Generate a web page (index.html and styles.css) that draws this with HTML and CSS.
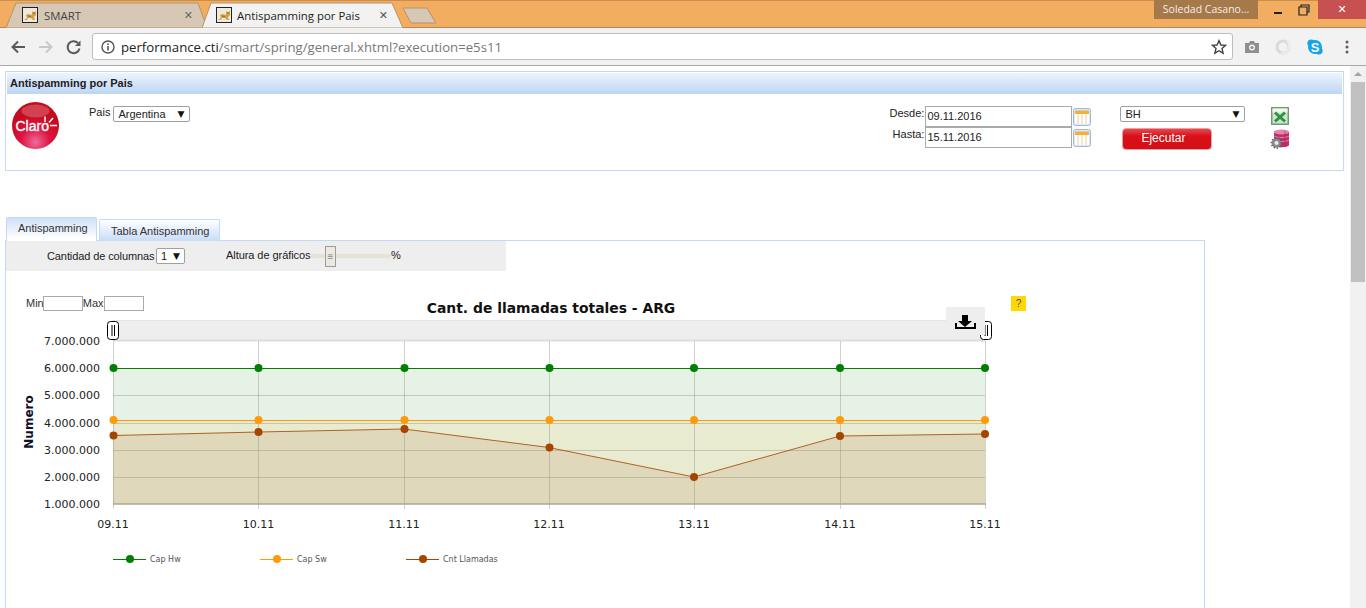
FILE: index.html
```html
<!DOCTYPE html>
<html>
<head>
    <meta charset="UTF-8">
    <title>Antispamming por Pais</title>
    <link rel="stylesheet" href="styles.css">
</head>
<body>
    <div class="tabstrip">
        <div class="btab btab-off">
            <svg class="btab-shape" viewBox="0 0 201 26" preserveAspectRatio="none"><path d="M0 26 L10 1 L192 1 L201 26 Z" fill="#d6c8b4" stroke="#b5946c"/></svg>
            <svg class="favicon" viewBox="0 0 16 16"><rect x=".5" y=".5" width="15" height="15" fill="#efe9dc" stroke="#222"/><path d="M2 13 L5 11 L4 8 L6 7 L10 8 L10 4 L11 5 L13 5 L14 3.500 L14 8 L12 10 L13 13 L11 13 L9 11 L6 11 L5 13 Z" fill="#d3a04a"/><path d="M6 9 L9 9.500 M11 6 H13" stroke="#8a6a35"/></svg>
            <span class="btab-title">SMART</span>
            <span class="btab-x">✕</span>
        </div>
        <div class="btab btab-on">
            <svg class="btab-shape" viewBox="0 0 201 26" preserveAspectRatio="none"><path d="M0 26 L9 1 L190 1 L201 26 Z" fill="#f2f2f2" stroke="#b5946c"/></svg>
            <svg class="favicon" viewBox="0 0 16 16"><rect x=".5" y=".5" width="15" height="15" fill="#efe9dc" stroke="#222"/><path d="M2 13 L5 11 L4 8 L6 7 L10 8 L10 4 L11 5 L13 5 L14 3.500 L14 8 L12 10 L13 13 L11 13 L9 11 L6 11 L5 13 Z" fill="#d3a04a"/><path d="M6 9 L9 9.500 M11 6 H13" stroke="#8a6a35"/></svg>
            <span class="btab-title">Antispamming por Pais</span>
            <span class="btab-x">✕</span>
        </div>
        <svg class="newtab" viewBox="0 0 36 18"><path d="M1 1 L25 1 L34 16 L9 16 Z" fill="#d6c8b4" stroke="#b5946c" stroke-linejoin="round"/></svg>
        <div class="user-chip">Soledad Casano...</div>
        <div class="win-ctl win-min">
            <svg width="10" height="10" viewBox="0 0 10 10"><rect x="1" y="7" width="8" height="2" fill="#222"/></svg>
        </div>
        <div class="win-ctl win-max">
            <svg width="12" height="12" viewBox="0 0 12 12"><path d="M3 3 V1 H11 V8 H9 M1 3 H9 V11 H1 Z" fill="none" stroke="#222" stroke-width="1.2"/></svg>
        </div>
        <div class="win-close">✕</div>
    </div>

    <div class="navbar">
        <svg class="nav-btn" viewBox="0 0 16 16"><path d="M15 8 H3 M8 2.500 L2.500 8 L8 13.500" fill="none" stroke="#5a5a5a" stroke-width="2"/></svg>
        <svg class="nav-btn" viewBox="0 0 16 16"><path d="M1 8 H13 M8 2.500 L13.500 8 L8 13.500" fill="none" stroke="#c8c8c8" stroke-width="2"/></svg>
        <svg class="nav-btn" viewBox="0 0 16 16"><path d="M13.500 9.500 A6 6 0 1 1 12 4" fill="none" stroke="#5a5a5a" stroke-width="2"/><path d="M14.500 1.500 V7 H9 Z" fill="#5a5a5a"/></svg>
        <div class="addr">
            <svg class="addr-info" viewBox="0 0 14 14"><circle cx="7" cy="7" r="6" fill="none" stroke="#555" stroke-width="1.400"/><rect x="6.200" y="6" width="1.600" height="4.500" fill="#555"/><rect x="6.200" y="3.400" width="1.600" height="1.600" fill="#555"/></svg>
            <span class="addr-host">performance.cti</span><span class="addr-path">/smart/spring/general.xhtml?execution=e5s11</span>
            <svg class="addr-star" viewBox="0 0 16 16"><path d="M8 1.600 L9.900 6 L14.600 6.400 L11 9.500 L12.100 14.200 L8 11.700 L3.900 14.200 L5 9.500 L1.400 6.400 L6.100 6 Z" fill="none" stroke="#444" stroke-width="1.400"/></svg>
        </div>
        <svg class="ext-camera" viewBox="0 0 16 14"><path d="M1 3 H5 L6 1 H10 L11 3 H15 V13 H1 Z" fill="#8f8f8f"/><circle cx="8" cy="7.500" r="3" fill="#f2f2f2"/><circle cx="8" cy="7.500" r="1.600" fill="#8f8f8f"/></svg>
        <svg class="ext-ring" viewBox="0 0 16 16"><circle cx="8" cy="8" r="6" fill="none" stroke="#d9d9d9" stroke-width="3"/><path d="M12 2 A7 7 0 0 1 6 14" fill="none" stroke="#ececec" stroke-width="2"/></svg>
        <svg class="ext-skype" viewBox="0 0 16 16"><circle cx="8" cy="8" r="7" fill="#12a5ec"/><circle cx="4.200" cy="4.200" r="3.800" fill="#12a5ec"/><circle cx="11.800" cy="11.800" r="3.800" fill="#12a5ec"/><text x="8" y="12.600" class="skype-s">S</text></svg>
        <svg class="ext-menu" viewBox="0 0 4 14"><circle cx="2" cy="2" r="1.500" fill="#5f5f5f"/><circle cx="2" cy="7" r="1.500" fill="#5f5f5f"/><circle cx="2" cy="12" r="1.500" fill="#5f5f5f"/></svg>
    </div>

    <div class="viewport">
        <div class="page">
            <div class="panel">
                <div class="panel-head">Antispamming por Pais</div>
                <div class="panel-body">
                    <svg class="logo" viewBox="0 0 47 47">
                        <defs>
                            <radialGradient id="logoFill" cx="50%" cy="85%" r="62%">
                                <stop offset="0" stop-color="#ee6a9c"/>
                                <stop offset=".5" stop-color="#de1440"/>
                                <stop offset="1" stop-color="#c40c1e"/>
                            </radialGradient>
                        </defs>
                        <circle cx="23.500" cy="23.500" r="23.500" fill="url(#logoFill)"/>
                        <ellipse cx="23.500" cy="9" rx="14" ry="6.500" fill="#fff" opacity=".22"/>
                        <text x="3.500" y="29" class="logo-text">Claro</text>
                        <path d="M33 20 V14.500 M37 20.500 L41 16 M38 23.500 H45" stroke="#fff" stroke-width="1.500" fill="none"/>
                    </svg>
                    <div class="pais">
                        <span class="pais-label">Pais</span>
                        <div class="select select-pais">Argentina<span class="arrow">▼</span></div>
                    </div>
                    <div class="dates">
                        <span class="date-label">Desde:</span>
                        <div class="date-input">09.11.2016</div>
                        <svg class="cal" viewBox="0 0 18 18"><rect x=".5" y=".5" width="17" height="17" rx="2" fill="#dce8f7" stroke="#9fb8dc"/><rect x="2" y="2.500" width="14" height="3.500" fill="#f4ae3c"/><path d="M2 6 H16 V16 H2 Z" fill="#fff"/><path d="M5 6 V16 M9 6 V16 M13 6 V16" stroke="#f0cf8d"/></svg>
                        <span class="date-label">Hasta:</span>
                        <div class="date-input">15.11.2016</div>
                        <svg class="cal" viewBox="0 0 18 18"><rect x=".5" y=".5" width="17" height="17" rx="2" fill="#dce8f7" stroke="#9fb8dc"/><rect x="2" y="2.500" width="14" height="3.500" fill="#f4ae3c"/><path d="M2 6 H16 V16 H2 Z" fill="#fff"/><path d="M5 6 V16 M9 6 V16 M13 6 V16" stroke="#f0cf8d"/></svg>
                    </div>
                    <div class="run">
                        <div class="select select-bh">BH<span class="arrow">▼</span></div>
                        <div class="run-btn">Ejecutar</div>
                    </div>
                    <div class="exports">
                        <svg class="icon-xls" viewBox="0 0 18 18"><rect width="18" height="18" fill="#6d9a72"/><rect x="1.500" y="1.500" width="15" height="15" fill="#cfe3cd"/><rect x="1.500" y="1.500" width="15" height="4" fill="#eef5ec"/><path d="M4 5.500 L14 14.500 M14 5.500 L4 14.500" stroke="#2a9440" stroke-width="3"/></svg>
                        <svg class="icon-db" viewBox="0 0 20 20"><path d="M4 3 C4 .5 19 .5 19 3 V16 C19 19 4 19 4 16 Z" fill="#bf2f6e"/><ellipse cx="11.500" cy="3" rx="7.500" ry="2.400" fill="#e684ac"/><path d="M4 7 C7 9 16 9 19 7 M4 11 C7 13 16 13 19 11" stroke="#e684ac" fill="none"/><path d="M15 2 V17" stroke="#8f1c52" stroke-opacity=".5"/><circle cx="6.500" cy="14" r="4.600" fill="#8a8a8a"/><circle cx="6.500" cy="14" r="5" fill="none" stroke="#5e5e5e" stroke-width="1.600" stroke-dasharray="1.600 1.400"/><circle cx="6.500" cy="14" r="2" fill="#eee"/></svg>
                    </div>
                </div>
            </div>

            <div class="tabs">
                <div class="tab tab-active">Antispamming</div>
                <div class="tab">Tabla Antispamming</div>
            </div>
            <div class="tab-content">
                <div class="chart-tools">
                    <span class="tool-cols">Cantidad de columnas</span>
                    <div class="select select-cols">1<span class="arrow">▼</span></div>
                    <span class="tool-height">Altura de gráficos</span>
                    <div class="slider"><div class="slider-track"></div><div class="slider-handle">≡</div></div>
                    <span class="tool-pct">%</span>
                </div>
                <div class="chart-head">
                    <div class="range">
                        <span class="range-min">Min</span><div class="range-input"></div>
                        <span>Max</span><div class="range-input"></div>
                    </div>
                    <div class="chart-title">Cant. de llamadas totales - ARG</div>
                    <div class="help">?</div>
                </div>
                <svg class="chart" viewBox="6 312 1198 296" width="1198" height="296">
                    <!-- range selector -->
                    <rect x="113" y="320.500" width="872" height="20" fill="#eeeeee" stroke="#e4e4e4"/>
                    <line x1="113" y1="340.500" x2="985" y2="340.500" stroke="#dcdcdc" stroke-width="2"/>
                    <rect x="107.500" y="321.500" width="11" height="18" rx="3" fill="#fff" stroke="#000"/>
                    <path d="M112 325 V336 M114.500 325 V336" stroke="#000"/>
                    <rect x="980.500" y="321.500" width="11" height="18" rx="3" fill="#fff" stroke="#000"/>
                    <path d="M985 325 V336 M987.500 325 V336" stroke="#000"/>

                    <!-- areas -->
                    <rect x="113" y="368" width="872" height="136" fill="#e6f2e6"/>
                    <rect x="113" y="421" width="872" height="83" fill="#e9ebd1"/>
                    <path d="M113 435.500 L258.500 432 L404 429 L549 447.500 L694 477 L840 436 L985 434 V504 H113 Z" fill="#e0d8bb"/>

                    <!-- grid -->
                    <g class="grid">
                        <path d="M113 395.500 H985 M113 423.500 H985 M113 450.500 H985 M113 477.500 H985"/>
                        <path d="M113.500 341 V509 M258.500 341 V509 M404.500 341 V509 M549.500 341 V509 M694.500 341 V509 M840.500 341 V509 M985.500 341 V509"/>
                    </g>
                    <line x1="113" y1="504" x2="986" y2="504" stroke="#aca698" stroke-width="1.400"/>

                    <!-- series -->
                    <path d="M113 368.500 H985" stroke="#008000" fill="none"/>
                    <path d="M113 420.500 H985" stroke="#ff9a00" fill="none"/>
                    <path d="M113 435.500 L258.500 432 L404 429 L549 447.500 L694 477 L840 436 L985 434" stroke="#a64a0a" stroke-opacity=".85" fill="none"/>
                    <g fill="#008000">
                        <circle cx="113.500" cy="368" r="4"/><circle cx="258.500" cy="368" r="4"/><circle cx="404.500" cy="368" r="4"/><circle cx="549.500" cy="368" r="4"/><circle cx="694" cy="368" r="4"/><circle cx="840" cy="368" r="4"/><circle cx="985" cy="368" r="4"/>
                    </g>
                    <g fill="#ff9a0a">
                        <circle cx="113.500" cy="420" r="4"/><circle cx="258.500" cy="420" r="4"/><circle cx="404.500" cy="420" r="4"/><circle cx="549.500" cy="420" r="4"/><circle cx="694" cy="420" r="4"/><circle cx="840" cy="420" r="4"/><circle cx="985" cy="420" r="4"/>
                    </g>
                    <g fill="#a44500">
                        <circle cx="113.500" cy="435.500" r="4"/><circle cx="258.500" cy="432" r="4"/><circle cx="404.500" cy="429" r="4"/><circle cx="549.500" cy="447.500" r="4"/><circle cx="694" cy="477" r="4"/><circle cx="840" cy="436" r="4"/><circle cx="985" cy="434" r="4"/>
                    </g>

                    <!-- axes -->
                    <g class="y-labels">
                        <text x="100" y="345">7.000.000</text>
                        <text x="100" y="372">6.000.000</text>
                        <text x="100" y="399">5.000.000</text>
                        <text x="100" y="427">4.000.000</text>
                        <text x="100" y="454">3.000.000</text>
                        <text x="100" y="481">2.000.000</text>
                        <text x="100" y="508">1.000.000</text>
                    </g>
                    <g class="x-labels">
                        <text x="113" y="528">09.11</text>
                        <text x="258.500" y="528">10.11</text>
                        <text x="404" y="528">11.11</text>
                        <text x="549" y="528">12.11</text>
                        <text x="694" y="528">13.11</text>
                        <text x="840" y="528">14.11</text>
                        <text x="985" y="528">15.11</text>
                    </g>
                    <text class="y-title" transform="translate(33 422) rotate(-90)">Numero</text>

                    <!-- legend -->
                    <path d="M113 559.500 H146" stroke="#008000"/><circle cx="130" cy="559" r="4" fill="#008000"/>
                    <text class="legend" x="150" y="562">Cap Hw</text>
                    <path d="M260 559.500 H293" stroke="#ff9a0a"/><circle cx="277" cy="559" r="4" fill="#ff9a0a"/>
                    <text class="legend" x="297" y="562">Cap Sw</text>
                    <path d="M406 559.500 H439" stroke="#a44500"/><circle cx="423" cy="559" r="4" fill="#a44500"/>
                    <text class="legend" x="443" y="562">Cnt Llamadas</text>

                    <!-- download -->
                    <rect x="946" y="307" width="39" height="28" fill="#eeeeee"/>
                    <path d="M962 315 H968 V321 H972 L965 327 L958 321 H962 Z" fill="#000"/>
                    <path d="M956 323 V328 H975 V323" fill="none" stroke="#000" stroke-width="2"/>
                </svg>
            </div>
        </div>
        <div class="scrollbar">
            <div class="scroll-up"></div>
            <div class="scroll-thumb"></div>
        </div>
    </div>
</body>
</html>
```

FILE: styles.css
```css
* {
    box-sizing: border-box;
    margin: 0;
    padding: 0;
}

html, body {
    height: 608px;
    overflow: hidden;
}

body {
    font-family: 'Liberation Sans', Arial, sans-serif;
    font-size: 11px;
    color: #222;
    background: #fff;
    display: flex;
    flex-direction: column;
}

/* browser chrome */
.tabstrip {
    height: 28px;
    flex: none;
    display: flex;
    align-items: flex-start;
    background: #f3ad61;
    box-shadow: inset 0 1px #c98f50;
    border-bottom: 1px solid #b08a5e;
    padding-left: 6px;
}

.btab {
    position: relative;
    width: 201px;
    height: 26px;
    margin-top: 2px;
    display: flex;
    align-items: center;
    font-family: 'Open Sans', 'Noto Sans', sans-serif;
    font-size: 11.4px;
    flex: none;
}

.btab-on {
    margin-left: -5px;
}

.btab-shape {
    position: absolute;
    left: 0;
    top: 0;
    width: 100%;
    height: 26px;
}

.favicon {
    position: relative;
    width: 16px;
    height: 16px;
    margin-left: 16px;
    margin-right: 6px;
    flex: none;
}

.btab-on .favicon {
    margin-left: 14px;
    margin-right: 5px;
}

.btab-title {
    position: relative;
    flex: 1;
    color: #444;
}

.btab-on .btab-title {
    color: #222;
}

.btab-x {
    position: relative;
    margin-right: 14px;
    font-family: 'DejaVu Sans', sans-serif;
    font-size: 11px;
    font-weight: bold;
    color: #666;
}

.btab-on .btab-x {
    margin-right: 15px;
    color: #555;
}

.newtab {
    width: 36px;
    height: 18px;
    margin-top: 7px;
    margin-left: -1px;
    flex: none;
}

.user-chip {
    margin-left: auto;
    width: 104px;
    height: 19px;
    background: #a6794a;
    color: #f3eee8;
    font-family: 'Open Sans', sans-serif;
    font-size: 10.5px;
    line-height: 19px;
    text-align: center;
    white-space: nowrap;
}

.win-ctl {
    height: 19px;
    display: flex;
    align-items: center;
    justify-content: center;
}

.win-min {
    width: 40px;
}

.win-max {
    width: 20px;
    padding-right: 8px;
}

.win-close {
    width: 48px;
    height: 19px;
    background: #c75050;
    color: #fff;
    font-family: 'DejaVu Sans', sans-serif;
    font-size: 11px;
    line-height: 19px;
    text-align: center;
}

.navbar {
    height: 38px;
    flex: none;
    display: flex;
    align-items: center;
    background: #f2f2f2;
    border-bottom: 1px solid #a9a9a9;
    padding-left: 10px;
}

.nav-btn {
    width: 16px;
    height: 16px;
    margin-right: 12px;
    flex: none;
}

.addr {
    width: 1141px;
    height: 27px;
    margin-left: -2px;
    display: flex;
    align-items: center;
    padding-left: 8px;
    background: #fff;
    border: 1px solid #bdbdbd;
    border-radius: 3px;
    font-family: 'Open Sans', 'Noto Sans', sans-serif;
    font-size: 13.2px;
    flex: none;
}

.addr-info {
    width: 14px;
    height: 14px;
    margin-right: 6px;
}

.addr-host {
    color: #222;
}

.addr-path {
    color: #777;
}

.addr-star {
    width: 16px;
    height: 16px;
    margin-left: auto;
    margin-right: 5px;
}

.ext-camera {
    width: 16px;
    height: 14px;
    margin-left: 11px;
}

.ext-ring {
    width: 16px;
    height: 16px;
    margin-left: 15px;
}

.ext-skype {
    width: 16px;
    height: 16px;
    margin-left: 16px;
}

.skype-s {
    font-family: 'Liberation Sans', sans-serif;
    font-size: 13px;
    font-weight: bold;
    fill: #fff;
    text-anchor: middle;
}

.ext-menu {
    width: 4px;
    height: 14px;
    margin-left: 22px;
}

/* page */
.viewport {
    flex: 1;
    display: flex;
    min-height: 0;
    overflow: hidden;
}

.page {
    flex: 1;
    min-width: 0;
    padding: 5px 0 0 5px;
}

.panel {
    width: 1339px;
    height: 100px;
    border: 1px solid #c4d9f5;
    padding: 1px;
}

.panel-head {
    height: 21px;
    padding-left: 3px;
    font-size: 11px;
    font-weight: bold;
    line-height: 20px;
    color: #222;
    background: linear-gradient(#eef4fd, #bcd5f5);
}

.panel-body {
    display: flex;
    align-items: flex-start;
    padding: 8px 0 0 5px;
}

.logo {
    width: 47px;
    height: 47px;
    flex: none;
}

.logo-text {
    font-family: 'Liberation Sans', sans-serif;
    font-size: 14px;
    fill: #fff;
    stroke: #fff;
    stroke-width: .35;
}

.pais {
    display: flex;
    align-items: flex-start;
    margin-left: 30px;
    margin-top: 4px;
}

.pais-label {
    margin-right: 3px;
}

.select {
    display: flex;
    justify-content: space-between;
    align-items: center;
    height: 16px;
    padding: 0 5px 0 4px;
    background: #fff;
    border: 1px solid #a0a0a0;
    border-radius: 2px;
    font-size: 11px;
    color: #222;
}

.arrow {
    font-family: 'DejaVu Sans', sans-serif;
    font-size: 9px;
    color: #111;
}

.select-pais {
    width: 77px;
}

.select-bh {
    width: 125px;
}

.select-cols {
    width: 29px;
    padding: 0 4px;
}

.dates {
    display: grid;
    grid-template-columns: 35px 147px 18px;
    column-gap: 1px;
    margin-left: 699px;
    margin-top: 4px;
    align-items: start;
}

.date-label {
    text-align: right;
    line-height: 14px;
}

.date-input {
    height: 21px;
    padding-left: 1px;
    line-height: 18px;
    background: #fff;
    border: 1px solid #aaa;
}

.cal {
    width: 18px;
    height: 18px;
    margin-top: 2px;
}

.run {
    margin-left: 29px;
    margin-top: 4px;
}

.run-btn {
    width: 90px;
    height: 22px;
    margin-top: 6px;
    margin-left: 2px;
    padding-left: 18px;
    background: linear-gradient(#e64a4f, #d8111a 35%, #d40f14);
    border: 1px solid #e8a0a0;
    border-radius: 4px;
    color: #fff;
    font-size: 12px;
    line-height: 18px;
}

.exports {
    display: flex;
    flex-direction: column;
    align-items: flex-start;
    margin-left: 25px;
    margin-top: 5px;
}

.icon-xls {
    width: 18px;
    height: 18px;
    margin-left: 1px;
}

.icon-db {
    width: 20px;
    height: 20px;
    margin-top: 4px;
}

/* tabs */
.tabs {
    display: flex;
    align-items: flex-end;
    gap: 2px;
    margin-top: 46px;
    margin-left: 1px;
    height: 24px;
    margin-bottom: -1px;
    position: relative;
}

.tab {
    height: 22px;
    padding: 0 10px 0 11px;
    border: 1px solid #c4d9f5;
    border-bottom: none;
    border-radius: 2px 2px 0 0;
    line-height: 22px;
    color: #333;
    background: linear-gradient(#fff, #c7dcf8);
}

.tab-active {
    height: 24px;
    width: 91px;
    white-space: nowrap;
    line-height: 21px;
    background: linear-gradient(#cfe0f8, #fff 90%);
}

.tab-content {
    width: 1200px;
    height: 400px;
    border: 1px solid #c4d9f5;
}

.chart-tools {
    width: 500px;
    height: 30px;
    display: flex;
    align-items: center;
    background: #eeeeee;
    padding-left: 41px;
}

.tool-cols {
    width: 109px;
    white-space: nowrap;
    letter-spacing: -0.1px;
}

.tool-height {
    margin-left: 41px;
    margin-top: -2px;
    width: 85px;
    white-space: nowrap;
    letter-spacing: -0.06px;
}

.tool-pct {
    margin-top: -2px;
}

.slider {
    position: relative;
    width: 80px;
    height: 21px;
}

.slider-track {
    position: absolute;
    left: 0;
    right: 0;
    top: 8px;
    height: 4px;
    background: #e6e2da;
}

.slider-handle {
    position: absolute;
    left: 14px;
    top: 0;
    width: 11px;
    height: 21px;
    background: #ece9e3;
    border: 1px solid #a39c92;
    font-size: 10px;
    line-height: 19px;
    text-align: center;
    color: #888;
}

.chart-head {
    display: grid;
    grid-template-columns: 138px 774px 15px;
    height: 16px;
    margin-top: 25px;
    padding-left: 20px;
}

.range {
    display: flex;
    align-items: flex-start;
    color: #333;
}

.range span {
    line-height: 15px;
}

.range-min {
    margin-right: -1px;
}

.range-input {
    width: 40px;
    height: 15px;
    background: #fff;
    border: 1px solid #aaa;
}

.chart-title {
    padding-top: 3px;
    font-family: 'DejaVu Sans', Verdana, sans-serif;
    font-size: 13.9px;
    font-weight: bold;
    line-height: 18px;
    color: #111;
    text-align: center;
    white-space: nowrap;
}

.help {
    width: 15px;
    height: 15px;
    margin-left: 73px;
    background: #ffd800;
    color: #555;
    font-size: 10px;
    line-height: 15px;
    text-align: center;
}

.chart {
    display: block;
    overflow: visible;
}

.grid path {
    fill: none;
    stroke: #8f8f80;
    stroke-opacity: .4;
}

.y-labels text {
    font-family: 'DejaVu Sans', Verdana, sans-serif;
    font-size: 11px;
    text-anchor: end;
    fill: #222;
}

.x-labels text {
    font-family: 'DejaVu Sans', Verdana, sans-serif;
    font-size: 11px;
    text-anchor: middle;
    fill: #222;
}

.y-title {
    font-family: 'DejaVu Sans', Verdana, sans-serif;
    font-size: 12px;
    font-weight: bold;
    text-anchor: middle;
    fill: #10102c;
}

.legend {
    font-family: 'DejaVu Sans', Verdana, sans-serif;
    font-size: 8px;
    fill: #555;
}

.scrollbar {
    width: 16px;
    flex: none;
    background: #f1f1f1;
    padding: 1px;
}

.scroll-up {
    width: 0;
    height: 0;
    margin: 5px auto 6px;
    border-left: 4px solid transparent;
    border-right: 4px solid transparent;
    border-bottom: 4px solid #a3a3a3;
}

.scroll-thumb {
    height: 200px;
    background: #c1c1c1;
}
```
